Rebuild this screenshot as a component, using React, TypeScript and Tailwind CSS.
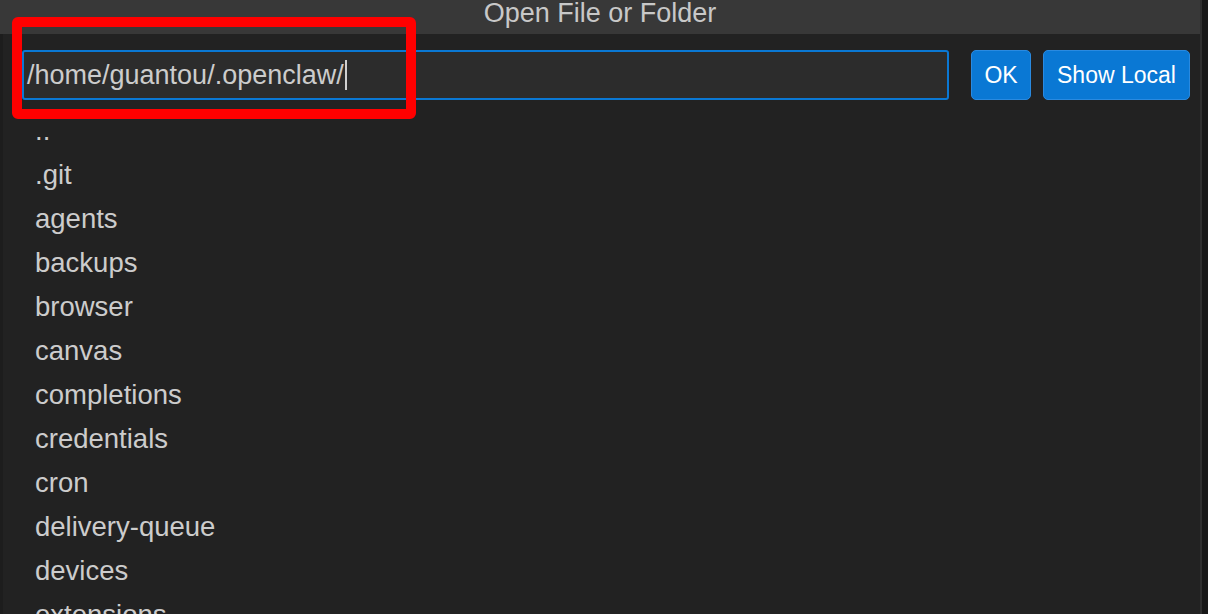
import React from "react";

const items = [
  "..",
  ".git",
  "agents",
  "backups",
  "browser",
  "canvas",
  "completions",
  "credentials",
  "cron",
  "delivery-queue",
  "devices",
  "extensions",
];

export default function App() {
  return (
    <div
      className="relative flex h-[614px] w-[1208px] overflow-hidden bg-[#181818]"
      style={{ fontFamily: '"Liberation Sans", Arial, sans-serif' }}
    >
      <div className="flex w-[1202px] flex-col border-r-2 border-[#2f2f2f] bg-[#222222]">
        <div className="flex h-[34px] shrink-0 items-start justify-center bg-[#383838] text-[27px] leading-[27px] text-[#c8c8c8]">
          Open File or Folder
        </div>
        <div className="flex flex-1 flex-col border-l-[3px] border-[#1d1d1d]">
          <div className="mt-4 flex items-center pl-[19px] pr-[10px]">
            <div className="flex h-[50px] w-[927px] items-center rounded-[3px] border-2 border-[#0a78d4] bg-[#2c2c2c] pl-[3px] text-[27px] text-[#cccccc]">
              <span>/home/guantou/.openclaw/</span>
              <span className="ml-[1px] inline-block h-[30px] w-[2px] bg-[#d0d0d0]" />
            </div>
            <button className="ml-[22px] flex h-[50px] w-[60px] items-center justify-center rounded-[5px] border border-[#2a8ae0] bg-[#0a78d4] text-[23px] text-white">
              OK
            </button>
            <button className="ml-[12px] flex h-[50px] w-[147px] items-center justify-center rounded-[5px] border border-[#2a8ae0] bg-[#0a78d4] text-[23px] text-white">
              Show Local
            </button>
          </div>
          <div className="mt-[9px] flex flex-col">
            {items.map((it) => (
              <div
                key={it}
                className="flex h-[44px] shrink-0 items-center pl-[32px] text-[27.5px] text-[#cccccc]"
              >
                {it}
              </div>
            ))}
          </div>
        </div>
      </div>
      <div className="pointer-events-none absolute left-[12px] top-[17px] h-[102px] w-[404px] rounded-[6px] border-[10px] border-[#ff0000]" />
    </div>
  );
}
